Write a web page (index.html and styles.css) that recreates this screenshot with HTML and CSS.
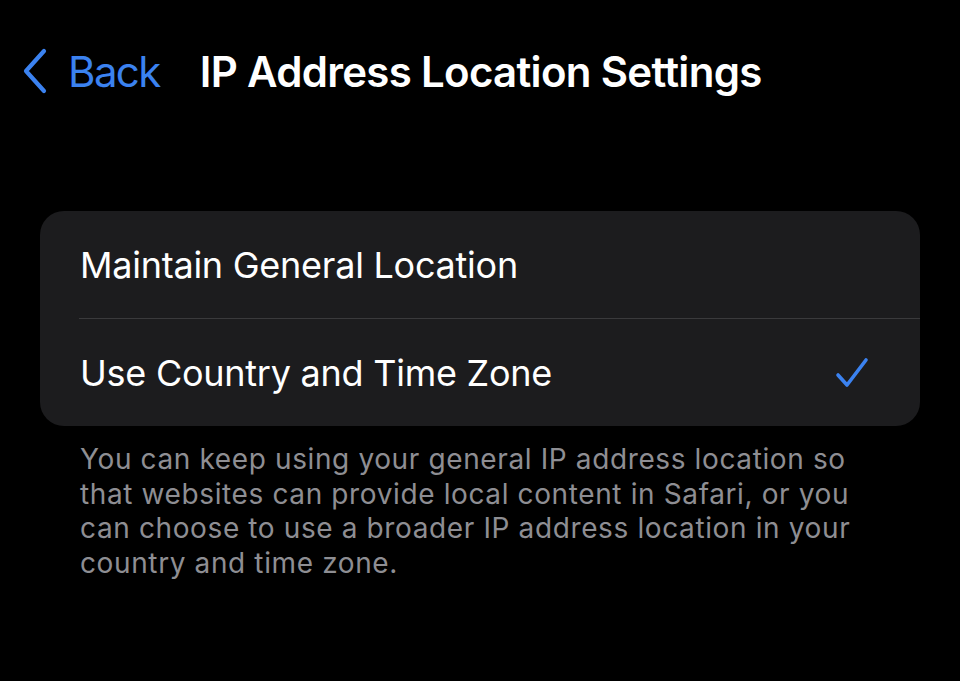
FILE: index.html
```html
<!DOCTYPE html>
<html lang="en">
<head>
<meta charset="utf-8">
<title>IP Address Location Settings</title>
<link rel="stylesheet" href="styles.css">
</head>
<body>
<div class="screen">
  <header class="nav">
    <a class="back" href="#">
      <svg class="chevron" width="26" height="46" viewBox="0 0 26 46" aria-hidden="true">
        <path d="M22 3 L4 23 L22 43" fill="none" stroke="#3b82f0" stroke-width="4.2" stroke-linecap="round" stroke-linejoin="round"/>
      </svg>
      <span class="back-label">Back</span>
    </a>
    <h1 class="title">IP Address Location Settings</h1>
  </header>

  <section class="group">
    <div class="row">
      <span class="row-label">Maintain General Location</span>
    </div>
    <div class="sep"></div>
    <div class="row">
      <span class="row-label">Use Country and Time Zone</span>
      <svg class="check" width="36" height="34" viewBox="0 0 36 34" aria-hidden="true">
        <path d="M4 19 L13 29 L32 4" fill="none" stroke="#3b82f0" stroke-width="3.6" stroke-linecap="round" stroke-linejoin="round"/>
      </svg>
    </div>
  </section>

  <p class="footer">You can keep using your general IP address location so that websites can provide local content in Safari, or you can choose to use a broader IP address location in your country and time zone.</p>
</div>
</body>
</html>
```

FILE: styles.css
```css
html, body {
  margin: 0;
  padding: 0;
  background: #000;
}
body {
  width: 960px;
  height: 681px;
  overflow: hidden;
  font-family: Inter, "Noto Sans", sans-serif;
  color: #fff;
}
.screen {
  padding: 0 40px;
}
.nav {
  display: flex;
  align-items: center;
  height: 142px;
}
.back {
  display: flex;
  align-items: center;
  text-decoration: none;
  color: #3b82f0;
  margin-left: -18px;
}
.chevron {
  display: block;
}
.back-label {
  font-size: 42px;
  font-weight: 400;
  margin-left: 20px;
  letter-spacing: -1.6px;
}
.title {
  margin: 0 0 0 40px;
  font-size: 42px;
  font-weight: 600;
  letter-spacing: -0.7px;
}
.group {
  margin-top: 69px;
  background: #1c1c1e;
  border-radius: 24px;
  overflow: hidden;
}
.row {
  height: 107px;
  display: flex;
  align-items: center;
  justify-content: space-between;
  padding: 0 50px 0 40px;
}
.row-label {
  font-size: 36px;
  font-weight: 400;
  letter-spacing: -0.25px;
}
.sep {
  height: 1px;
  background: #3a3a3c;
  margin-left: 39px;
}
.check {
  display: block;
}
.footer {
  margin: 16px 65px 0 40px;
  font-size: 28px;
  line-height: 34.5px;
  letter-spacing: 0.62px;
  color: #8e8e93;
}
```
